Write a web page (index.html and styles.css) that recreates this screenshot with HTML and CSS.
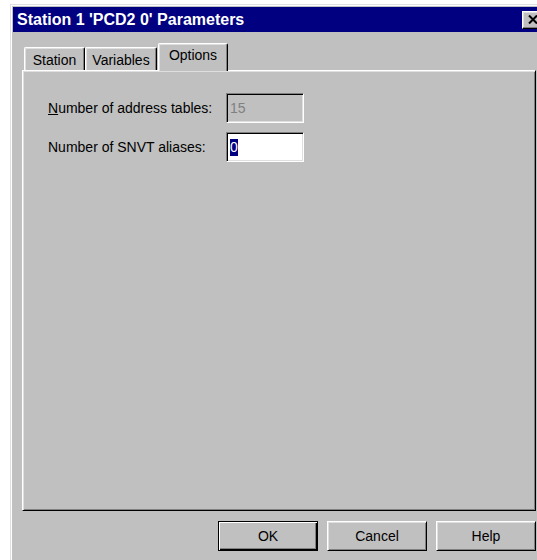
FILE: index.html
```html
<!DOCTYPE html>
<html lang="en">
<head>
<meta charset="utf-8">
<title>Station 1 'PCD2 0' Parameters</title>
<link rel="stylesheet" href="styles.css">
</head>
<body>
<div class="window">
  <div class="titlebar">
    <span class="title">Station 1 'PCD2 0' Parameters</span>
    <span class="close-btn">
      <svg width="10" height="9" viewBox="0 0 10 9">
        <path d="M1 0.5 L9 8.5 M9 0.5 L1 8.5" stroke="#000" stroke-width="2" fill="none"/>
      </svg>
    </span>
  </div>
  <div class="content">
    <div class="tabs">
      <div class="tab tab-station">Station</div>
      <div class="tab tab-variables">Variables</div>
      <div class="tab tab-options active">Options</div>
    </div>
    <div class="panel">
      <div class="form">
        <label class="label"><u>N</u>umber of address tables:</label>
        <div class="field disabled">15</div>
        <label class="label">Number of SNVT aliases:</label>
        <div class="field"><span class="sel">0</span></div>
      </div>
    </div>
    <div class="buttons">
      <div class="btn default">OK</div>
      <div class="btn">Cancel</div>
      <div class="btn">Help</div>
    </div>
  </div>
</div>
</body>
</html>
```

FILE: styles.css
```css
html, body {
  margin: 0;
  padding: 0;
}

body {
  width: 537px;
  height: 560px;
  overflow: hidden;
  background: #ffffff;
  font-family: "Liberation Sans", Arial, sans-serif;
  font-size: 14px;
  color: #000;
}

/* dialog frame; its right and lower edges sit outside the visible area */
.window {
  margin: 4px 0 0 10px;
  width: 527px;
  height: 556px;
  box-sizing: border-box;
  background: #c0c0c0;
  border-top: 1px solid #dfdfdf;
  border-left: 1px solid #dfdfdf;
  box-shadow: inset 1px 1px #fff;
  padding: 2px 0 0 2px;
  overflow: hidden;
}

.titlebar {
  width: 532px;
  height: 25px;
  box-sizing: border-box;
  background: #000080;
  color: #fff;
  display: flex;
  align-items: center;
  justify-content: space-between;
  padding-left: 4px;
}

.title {
  font-weight: bold;
  font-size: 16px;
  white-space: nowrap;
}

.close-btn {
  width: 21px;
  height: 18px;
  box-sizing: border-box;
  margin-right: 2px;
  background: #c0c0c0;
  border: 1px solid;
  border-color: #fff #000 #000 #fff;
  box-shadow: inset -1px -1px #808080, inset 1px 1px #dfdfdf;
  display: flex;
  align-items: center;
  justify-content: center;
}

.content {
  width: 532px;
  box-sizing: border-box;
  padding: 11px 9px 0 9px;
}

.tabs {
  height: 27px;
  display: flex;
  align-items: flex-end;
  padding-left: 2px;
  position: relative;
  z-index: 1;
}

.tab {
  height: 23px;
  box-sizing: border-box;
  border-top: 1px solid #fff;
  border-left: 1px solid #fff;
  border-right: 1px solid #000;
  border-radius: 2px 2px 0 0;
  box-shadow: inset -1px 0 #808080, inset 1px 1px #dfdfdf;
  text-align: center;
  line-height: 20px;
  padding-top: 2px;
  white-space: nowrap;
}

.tab-station {
  width: 61px;
}

.tab-variables {
  width: 72px;
}

.tab-options {
  width: 70px;
  margin-left: 1px;
}

.tab.active {
  height: 28px;
  margin-bottom: -1px;
  background: #c0c0c0;
  line-height: 21px;
  padding-top: 1px;
}

.panel {
  height: 441px;
  box-sizing: border-box;
  border: 1px solid;
  border-color: #fff #000 #000 #fff;
  box-shadow: inset 1px 1px #dfdfdf, inset -1px -1px #808080;
  padding: 22px 0 0 25px;
}

.form {
  display: grid;
  grid-template-columns: 178px 78px;
  row-gap: 9px;
  align-items: center;
}

.label {
  white-space: nowrap;
}

.field {
  height: 30px;
  box-sizing: border-box;
  background: #fff;
  border: 1px solid;
  border-color: #808080 #fff #fff #808080;
  box-shadow: inset 1px 1px #000, inset -1px -1px #dfdfdf;
  padding: 0 3px;
  display: flex;
  align-items: center;
}

.field.disabled {
  background: #c0c0c0;
  color: #808080;
}

.sel {
  background: #000080;
  color: #fff;
  line-height: 17px;
}

.buttons {
  display: flex;
  justify-content: flex-end;
  gap: 9px;
  margin-top: 10px;
}

.btn {
  width: 100px;
  height: 30px;
  box-sizing: border-box;
  border: 1px solid;
  border-color: #fff #000 #000 #fff;
  box-shadow: inset 1px 1px #dfdfdf, inset -1px -1px #808080;
  display: flex;
  align-items: center;
  justify-content: center;
}

.btn.default {
  border: 1px solid #000;
  box-shadow: inset 1px 1px #fff, inset -1px -1px #000, inset -2px -2px #808080;
}
```
